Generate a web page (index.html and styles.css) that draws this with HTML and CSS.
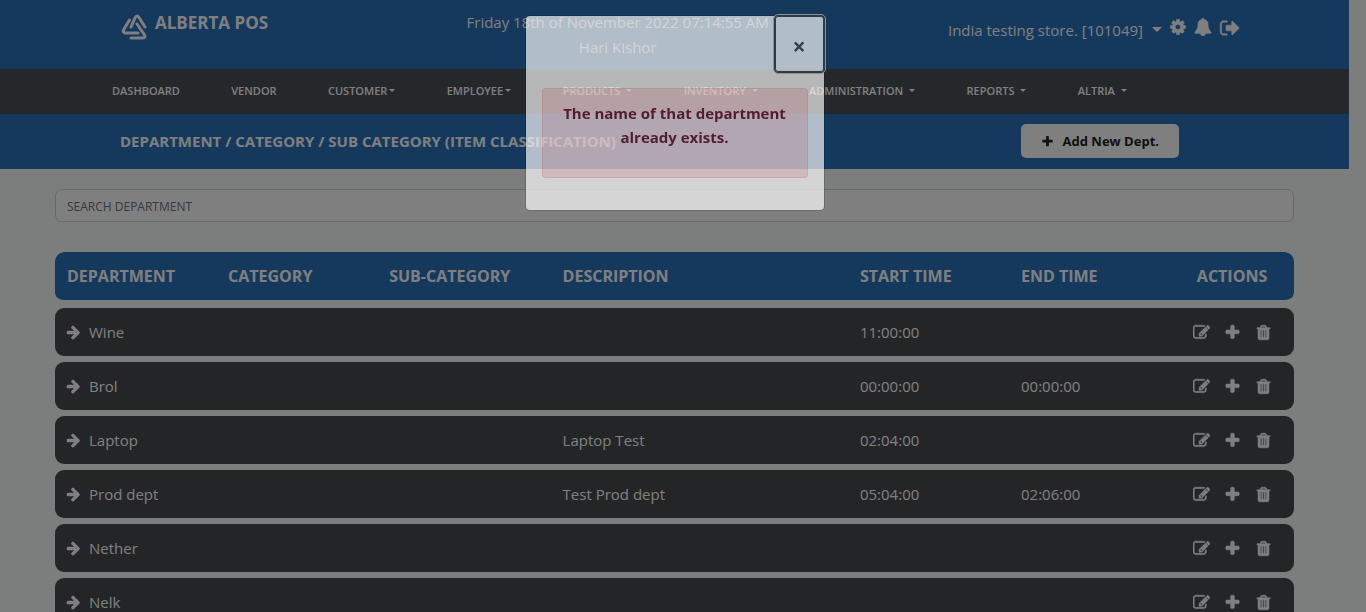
FILE: index.html
```html
<!DOCTYPE html>
<html lang="en">
<head>
<meta charset="utf-8">
<title>Alberta POS - Departments</title>
<link rel="stylesheet" href="styles.css">
</head>
<body>
<svg class="sprite" aria-hidden="true">
  <symbol id="plus" viewBox="0 0 1792 1792"><path d="M1600 736v192q0 40-28 68t-68 28h-416v416q0 40-28 68t-68 28h-192q-40 0-68-28t-28-68v-416h-416q-40 0-68-28t-28-68v-192q0-40 28-68t68-28h416v-416q0-40 28-68t68-28h192q40 0 68 28t28 68v416h416q40 0 68 28t28 68z"/></symbol>
  <symbol id="arrow" viewBox="0 0 1792 1792"><path d="M1664 960q0 53-37 90l-651 652q-39 37-91 37-51 0-90-37l-75-75q-38-38-38-91t38-91l293-293h-704q-52 0-84.500-37.500t-32.500-90.500v-128q0-53 32.500-90.500t84.500-37.500h704l-293-294q-38-36-38-90t38-90l75-75q38-38 90-38 53 0 91 38l651 651q37 35 37 90z"/></symbol>
  <symbol id="trash" viewBox="0 0 1792 1792"><path d="M704 1376v-704q0-14-9-23t-23-9h-64q-14 0-23 9t-9 23v704q0 14 9 23t23 9h64q14 0 23-9t9-23zm256 0v-704q0-14-9-23t-23-9h-64q-14 0-23 9t-9 23v704q0 14 9 23t23 9h64q14 0 23-9t9-23zm256 0v-704q0-14-9-23t-23-9h-64q-14 0-23 9t-9 23v704q0 14 9 23t23 9h64q14 0 23-9t9-23zm-544-992h448l-48-117q-7-9-17-11h-317q-10 2-17 11zm928 32v64q0 14-9 23t-23 9h-96v948q0 83-47 143.500t-113 60.500h-832q-66 0-113-58.500t-47-141.500v-952h-96q-14 0-23-9t-9-23v-64q0-14 9-23t23-9h309l70-167q15-37 54-63t79-26h320q40 0 79 26t54 63l70 167h309q14 0 23 9t9 23z"/></symbol>
  <symbol id="edit" viewBox="0 0 1792 1792"><path d="M888 1184l116-116-152-152-116 116v56h96v96h56zm440-720q-16-16-33 1l-350 350q-17 17-1 33t33-1l350-350q17-17 1-33zm80 594v190q0 119-84.500 203.500t-203.500 84.500h-832q-119 0-203.500-84.500t-84.500-203.500v-832q0-119 84.500-203.500t203.500-84.500h832q63 0 117 25 15 7 18 23 3 17-9 29l-49 49q-14 14-32 8-23-6-45-6h-832q-66 0-113 47t-47 113v832q0 66 47 113t113 47h832q66 0 113-47t47-113v-126q0-13 9-22l64-64q15-15 35-7t20 29zm-96-738l288 288-672 672h-288v-288zm444 132l-92 92-288-288 92-92q28-28 68-28t68 28l152 152q28 28 28 68t-28 68z"/></symbol>
  <symbol id="cog" viewBox="0 0 1792 1792"><path d="M1152 896q0-106-75-181t-181-75-181 75-75 181 75 181 181 75 181-75 75-181zm512-109v222q0 12-8 23t-20 13l-185 28q-19 54-39 91 35 50 107 138 10 12 10 25t-9 23q-27 37-99 108t-94 71q-12 0-26-9l-138-108q-44 23-91 38-16 136-29 186-7 28-36 28h-222q-14 0-24.500-8.500t-11.500-21.500l-28-184q-49-16-90-37l-141 107q-10 9-25 9-14 0-25-11-126-114-165-168-7-10-7-23 0-12 8-23 15-21 51-66.500t54-70.500q-27-50-41-99l-183-27q-13-2-21-12.500t-8-23.500v-222q0-12 8-23t19-13l186-28q14-46 39-92-40-57-107-138-10-12-10-24 0-10 9-23 26-36 98.500-107.500t94.500-71.500q13 0 26 10l138 107q44-23 91-38 16-136 29-186 7-28 36-28h222q14 0 24.500 8.500t11.500 21.500l28 184q49 16 90 37l142-107q9-9 24-9 13 0 25 10 129 119 165 170 7 8 7 22 0 12-8 23-15 21-51 66.500t-54 70.500q26 50 41 98l183 28q13 2 21 12.500t8 23.500z"/></symbol>
  <symbol id="bell" viewBox="0 0 1792 1792"><path d="M1728 1408q0 52-38 90t-90 38h-448q0 106-75 181t-181 75-181-75-75-181H192q-52 0-90-38t-38-90q50-42 91-88t85-119.500 74.500-158.500 50-206 19.500-260q0-152 117-282.500T808 135q-8-19-8-39 0-40 28-68t68-28 68 28 28 68q0 20-8 39 190 28 307 158.500T1408 576q0 139 19.500 260t50 206 74.500 158.500 85 119.500 91 88z"/></symbol>
  <symbol id="signout" viewBox="0 0 1792 1792"><path d="M704 1440q0 4 1 20t.5 26.500-3 23.500-10 19.500-20.500 6.500h-320q-119 0-203.500-84.500t-84.500-203.500v-704q0-119 84.500-203.500t203.500-84.500h320q13 0 22.500 9.500t9.500 22.500q0 4 1 20t.5 26.500-3 23.500-10 19.500-20.500 6.500h-320q-66 0-113 47t-47 113v704q0 66 47 113t113 47h312l11.500 1 11.500 3 8 5.500 7 9 2 13.500zm1056-544q0 26-19 45l-544 544q-19 19-45 19t-45-19-19-45v-288h-448q-26 0-45-19t-19-45v-384q0-26 19-45t45-19h448v-288q0-26 19-45t45-19 45 19l544 544q19 19 19 45z"/></symbol>
</svg>

<header class="topbar">
  <a class="brand" href="#">
    <svg class="logo" viewBox="0 0 26 27" aria-hidden="true">
      <path d="M10 14L13.500 6Q15.500 1 18 4.500L24 14" class="logo-line"/>
      <path d="M8.500 7L3 16Q1 20 5 20H17" class="logo-line"/>
      <path d="M16 11L23.500 22Q25 25 21 25H10" class="logo-line"/>
    </svg>
    <span>ALBERTA POS</span>
  </a>
  <div class="clock">
    <div>Friday 18th of November 2022 07:14:55 AM</div>
    <div>Hari Kishor</div>
  </div>
  <div class="account">
    <a class="store" href="#">India testing store. [101049]<i class="caret"></i></a>
    <a href="#" aria-label="Settings"><svg class="icon-top"><use href="#cog"/></svg></a>
    <a href="#" aria-label="Notifications"><svg class="icon-top"><use href="#bell"/></svg></a>
    <a href="#" aria-label="Sign out"><svg class="icon-out"><use href="#signout"/></svg></a>
  </div>
</header>

<nav class="menu">
  <a href="#">DASHBOARD</a>
  <a href="#">VENDOR</a>
  <a href="#">CUSTOMER<i class="caret"></i></a>
  <a href="#">EMPLOYEE<i class="caret"></i></a>
  <a href="#" class="wide">PRODUCTS<i class="caret"></i></a>
  <a href="#" class="wide">INVENTORY<i class="caret"></i></a>
  <a href="#" class="wide">ADMINISTRATION<i class="caret"></i></a>
  <a href="#" class="wide">REPORTS<i class="caret"></i></a>
  <a href="#" class="wide">ALTRIA<i class="caret"></i></a>
</nav>

<div class="titlebar">
  <h1>DEPARTMENT / CATEGORY / SUB CATEGORY (ITEM CLASSIFICATION)</h1>
  <button class="add" type="button"><svg class="icon-add"><use href="#plus"/></svg>Add New Dept.</button>
</div>

<main class="content">
  <input class="search" type="text" placeholder="SEARCH DEPARTMENT" aria-label="Search department">
  <table class="departments">
    <thead>
      <tr><th class="c-name">DEPARTMENT</th><th class="c-cat">CATEGORY</th><th class="c-sub">SUB-CATEGORY</th><th class="c-desc">DESCRIPTION</th><th class="c-time">START TIME</th><th class="c-time">END TIME</th><th class="c-act">ACTIONS</th></tr>
    </thead>
    <tbody id="rows"></tbody>
  </table>
</main>

<div class="backdrop"></div>
<div class="modal" role="dialog" aria-modal="true" aria-labelledby="message">
  <div class="modal-box">
    <div class="modal-head"><button class="close" type="button" aria-label="Close">×</button></div>
    <div class="modal-body">
      <div class="alert"><p id="message">The name of that department already exists.</p></div>
    </div>
  </div>
</div>
<script src="rows.js"></script>
</body>
</html>
```

FILE: styles.css
```css
* { box-sizing: border-box; }

body {
  margin: 0;
  padding-right: 17px;
  overflow: hidden;
  background: #f8fcfa;
  color: #fff;
  font: 15px/24px "Open Sans", "Noto Sans", sans-serif;
}

a { color: inherit; text-decoration: none; }
svg { display: block; fill: currentColor; }
.sprite { display: none; }

.caret {
  display: inline-block;
  margin-left: 2px;
  vertical-align: 3px;
  border: 3px solid transparent;
  border-top-color: currentColor;
  border-bottom: 0;
}

.topbar {
  display: grid;
  grid-template-columns: 11fr auto 15fr;
  align-items: start;
  height: 69px;
  padding: 10px 109px 0 121px;
  background: #2a72ba;
}
.brand { display: flex; gap: 8px; font-size: 17px; font-weight: 700; line-height: 26px; }
.logo { width: 26px; height: 27px; margin-top: 3px; }
.logo-line { fill: none; stroke: currentColor; stroke-width: 3; stroke-linecap: round; stroke-linejoin: round; }
.clock { text-align: center; line-height: 25px; }
.account { display: flex; justify-content: flex-end; gap: 7px; padding-top: 8px; }
.store .caret { margin-left: 9px; vertical-align: 4px; border-width: 5px 5px 0; }
.icon-top { width: 18px; height: 18px; stroke: currentColor; stroke-width: 40px; }
.icon-out { width: 21px; height: 20px; stroke: currentColor; stroke-width: 40px; }

.menu {
  display: flex;
  justify-content: space-between;
  padding: 10px 222px 11px 112px;
  background: #485054;
  font-size: 11px;
  font-weight: 600;
}
.menu .wide .caret { margin-left: 6px; }

.titlebar {
  display: flex;
  align-items: center;
  justify-content: space-between;
  padding: 10px 170px 11px 120px;
  background: #2a72ba;
}
h1 { margin: 0; font-size: 15px; font-weight: 700; }
.add {
  display: flex;
  align-items: center;
  gap: 9px;
  height: 34px;
  padding: 0 20px;
  border: 0;
  border-radius: 5px;
  background: #fff;
  color: #222;
  font: 700 13px/20px "Open Sans", "Noto Sans", sans-serif;
}
.icon-add { width: 13px; height: 13px; }

.content { padding: 20px 55px 0; }
.search {
  display: block;
  width: 100%;
  height: 33px;
  padding: 1px 11px 0;
  border: 1px solid #ced4da;
  border-radius: 7px;
  background: #fff;
  font: 12px "Open Sans", "Noto Sans", sans-serif;
}
.search::placeholder { color: #6c757d; opacity: 1; }

.departments {
  width: 100%;
  margin-top: 24px;
  table-layout: fixed;
  border-collapse: separate;
  border-spacing: 0 6px;
}
th, td { padding: 0 12px; text-align: left; }
th {
  height: 50px;
  border-bottom: 2px solid transparent;
  background: #2a72ba;
  background-clip: padding-box;
  font-size: 16px;
  font-weight: 700;
  white-space: nowrap;
}
td { height: 48px; background: #484a4e; }
th:first-child, td:first-child { border-radius: 9px 0 0 9px; }
th:last-child, td:last-child { border-radius: 0 9px 9px 0; }
td:first-child { padding-left: 10px; }
.c-name, .c-cat, .c-time { width: 13%; }
.c-sub { width: 14%; }
.c-desc { width: 24%; }
.c-act { width: 10%; text-align: center; }
.name, .actions { display: flex; align-items: center; }
.name { gap: 8px; }
.name svg { width: 16px; height: 16px; }
.actions { justify-content: center; gap: 14px; }
.actions button { padding: 0; border: 0; background: none; color: inherit; }
.actions svg { width: 17px; height: 17px; stroke: currentColor; stroke-width: 60px; }

.backdrop { position: fixed; inset: 0; background: rgba(0, 0, 0, .5); }
.modal {
  position: fixed;
  inset: 0 17px 0 0;
  display: flex;
  align-items: flex-start;
  justify-content: center;
  padding-top: 16px;
}
.modal-box {
  width: 298px;
  border-radius: 4px;
  background: rgba(255, 255, 255, .67);
  box-shadow: 0 0 0 1px rgba(0, 0, 0, .15);
}
.modal-head { display: flex; justify-content: flex-end; height: 56px; }
.close {
  width: 49px;
  height: 56px;
  padding: 4px 0 0;
  border: 0;
  border-radius: 3px;
  outline: 1px solid #8a9298;
  outline-offset: 1px;
  box-shadow: 0 0 0 1px #303a42, inset 0 0 0 1px #303a42;
  background: none;
  color: #36434e;
  font: 700 23px/24px "Open Sans", "Noto Sans", sans-serif;
}
.modal-body { padding: 16px; }
.alert {
  margin-bottom: 16px;
  padding: 12px 20px;
  border: 1px solid rgba(180, 12, 20, .1);
  border-radius: 4px;
  background: rgba(180, 12, 20, .13);
  color: #521c30;
  font-weight: 700;
  text-align: center;
}
.alert p { margin: 0 0 16px; }
```

FILE: rows.js
```js
const departments = [
  ["Wine", "", "11:00:00", ""],
  ["Brol", "", "00:00:00", "00:00:00"],
  ["Laptop", "Laptop Test", "02:04:00", ""],
  ["Prod dept", "Test Prod dept", "05:04:00", "02:06:00"],
  ["Nether", "", "", ""],
  ["Nelk", "", "", ""]
];

const button = (icon, label) =>
  `<button type="button" aria-label="${label}"><svg><use href="#${icon}"/></svg></button>`;

document.getElementById("rows").innerHTML = departments.map(([name, description, start, end]) => `
  <tr>
    <td><div class="name"><svg><use href="#arrow"/></svg>${name}</div></td>
    <td></td><td></td>
    <td>${description}</td><td>${start}</td><td>${end}</td>
    <td><div class="actions">${button("edit", "Edit " + name)}${button("plus", "Add to " + name)}${button("trash", "Delete " + name)}</div></td>
  </tr>`).join("");
```
